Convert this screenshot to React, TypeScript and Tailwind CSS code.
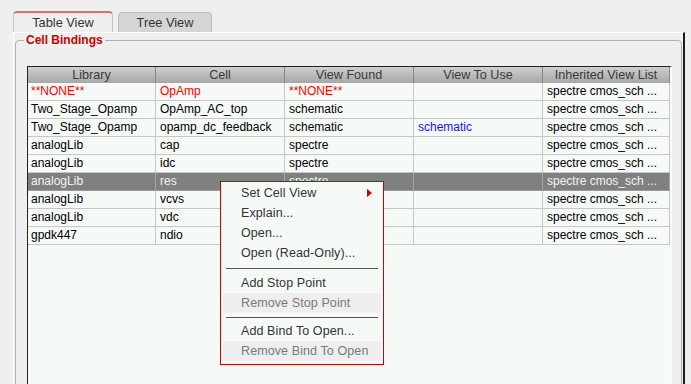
const cols = [128, 129, 129, 129, 127];

type Cell = { text: string; color?: string };
type Row = { cells: Cell[]; selected?: boolean };

const red = "text-[#ff0000]";
const blue = "text-[#1414f0]";

const rows: Row[] = [
  { cells: [{ text: "**NONE**", color: red }, { text: "OpAmp", color: red }, { text: "**NONE**", color: red }, { text: "" }, { text: "spectre cmos_sch ..." }] },
  { cells: [{ text: "Two_Stage_Opamp" }, { text: "OpAmp_AC_top" }, { text: "schematic" }, { text: "" }, { text: "spectre cmos_sch ..." }] },
  { cells: [{ text: "Two_Stage_Opamp" }, { text: "opamp_dc_feedback" }, { text: "schematic" }, { text: "schematic", color: blue }, { text: "spectre cmos_sch ..." }] },
  { cells: [{ text: "analogLib" }, { text: "cap" }, { text: "spectre" }, { text: "" }, { text: "spectre cmos_sch ..." }] },
  { cells: [{ text: "analogLib" }, { text: "idc" }, { text: "spectre" }, { text: "" }, { text: "spectre cmos_sch ..." }] },
  { cells: [{ text: "analogLib" }, { text: "res" }, { text: "spectre" }, { text: "" }, { text: "spectre cmos_sch ..." }], selected: true },
  // view found of the rows below sits under the popup menu
  { cells: [{ text: "analogLib" }, { text: "vcvs" }, { text: "" }, { text: "" }, { text: "spectre cmos_sch ..." }] },
  { cells: [{ text: "analogLib" }, { text: "vdc" }, { text: "" }, { text: "" }, { text: "spectre cmos_sch ..." }] },
  { cells: [{ text: "gpdk447" }, { text: "ndio" }, { text: "" }, { text: "" }, { text: "spectre cmos_sch ..." }] },
];

const headers = ["Library", "Cell", "View Found", "View To Use", "Inherited View List"];

function MenuItem({ label, disabled, arrow }: { label: string; disabled?: boolean; arrow?: boolean }) {
  if (disabled) {
    return (
      <div className="mx-[2px] flex h-[20px] items-center bg-[#eeeeee] pl-[18px] text-[#7a7a7a]">{label}</div>
    );
  }
  return (
    <div className="flex h-[20px] items-center justify-between pl-[20px] pr-[11px] text-[#333333]">
      <span>{label}</span>
      {arrow && (
        <svg width="5" height="8" viewBox="0 0 5 8">
          <polygon points="0,0 5,4 0,8" fill="#c80000" />
        </svg>
      )}
    </div>
  );
}

function Separator({ h }: { h: string }) {
  return (
    <div className={`flex items-center px-[5px] ${h}`}>
      <div className="h-px w-full bg-[#555555]" />
    </div>
  );
}

export default function App() {
  return (
    <div className="relative h-[384px] w-[691px] overflow-hidden bg-[#efefef] font-['Liberation_Sans',Arial,sans-serif]">
      {/* tabs */}
      <div className="flex items-end gap-[5px] pl-[13px] pt-[11px]">
        <div className="flex h-[21px] w-[100px] items-center justify-center rounded-t-[4px] border border-b-0 border-[#c4c4c4] border-t-2 border-t-[#e06c6c] bg-[#efefef] text-[12.8px] text-[#333333]">
          Table View
        </div>
        <div className="flex h-[20px] w-[94px] items-center justify-center rounded-t-[4px] border border-b-0 border-[#bdbdbd] bg-[#d4d6d4] text-[12.8px] text-[#333333]">
          Tree View
        </div>
      </div>

      {/* tab pane */}
      <div className="ml-[13px] h-[360px] w-[672px] border-l border-t border-white border-r-2 border-r-[#1c1c1c]">
        <fieldset className="ml-[1px] h-[360px] w-[667px] rounded-[4px] border border-[#b0b0b0]">
          <legend className="ml-[8px] px-[2px] text-[12px] leading-[14px] font-bold text-[#cc0000]">Cell Bindings</legend>

          <div className="ml-[11px] mt-[19px] h-[320px] w-[645px] border-l border-t border-[#222222] border-r-2 border-r-[#fafafa] bg-[#f5faf6] text-[12px]">
            {/* header */}
            <div className="flex h-[16px] bg-gradient-to-b from-[#cfcfcf] to-[#a7a7a7]">
              {headers.map((h, i) => (
                <div
                  key={h}
                  style={{ width: cols[i] }}
                  className="shrink-0 border-r border-[#878787] text-center text-[12.6px] leading-[16px] text-[#3a3a3a]"
                >
                  {h}
                </div>
              ))}
            </div>

            {rows.map((r, ri) => (
              <div
                key={ri}
                className={`flex h-[18px] border-b ${r.selected ? "border-[#9a9a9a] bg-[#808080] text-[#f4f4f4]" : "border-[#c6c6c6] text-black"}`}
              >
                {r.cells.map((c, ci) => (
                  <div
                    key={ci}
                    style={{ width: cols[ci] }}
                    className={`shrink-0 overflow-hidden whitespace-nowrap border-r leading-[16px] ${ci === 0 ? "pl-[3px]" : "pl-[4px]"} ${r.selected ? "border-[#a4a4a4]" : "border-[#c6c6c6]"} ${c.color ?? ""}`}
                  >
                    {c.text}
                  </div>
                ))}
              </div>
            ))}
          </div>
        </fieldset>
      </div>

      {/* context menu */}
      <div className="absolute left-[220px] top-[181px] w-[164px] border border-[#d40000] bg-[#f5faf6] pb-[3px] pt-[1px] text-[12.5px] tracking-[0.1px]">
        <MenuItem label="Set Cell View" arrow />
        <MenuItem label="Explain..." />
        <MenuItem label="Open..." />
        <MenuItem label="Open (Read-Only)..." />
        <Separator h="h-[10px]" />
        <MenuItem label="Add Stop Point" />
        <MenuItem label="Remove Stop Point" disabled />
        <Separator h="h-[8px]" />
        <MenuItem label="Add Bind To Open..." />
        <MenuItem label="Remove Bind To Open" disabled />
      </div>
    </div>
  );
}
